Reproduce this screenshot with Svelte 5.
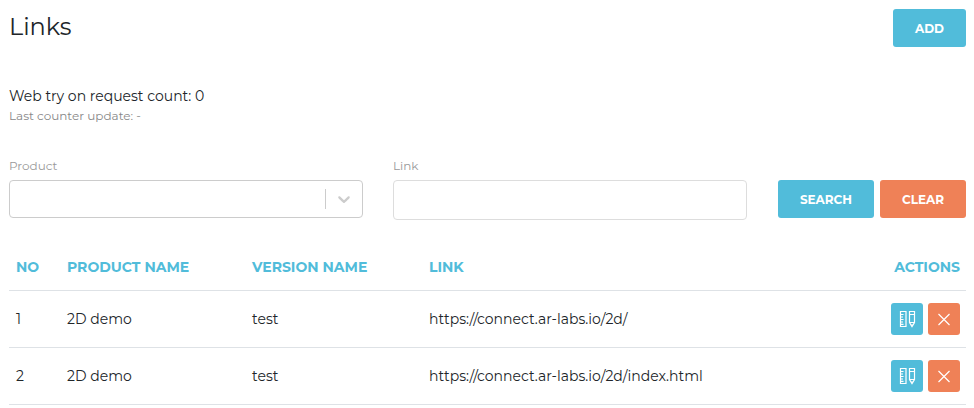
<script>
	let product = $state('');
	let link = $state('');

	const rows = [
		{ no: 1, product: '2D demo', version: 'test', link: 'https://connect.ar-labs.io/2d/' },
		{ no: 2, product: '2D demo', version: 'test', link: 'https://connect.ar-labs.io/2d/index.html' }
	];

	function clear() {
		product = '';
		link = '';
	}
</script>

<main>
	<header>
		<h1>Links</h1>
		<button class="btn" type="button">Add</button>
	</header>

	<section class="counter">
		<p>Web try on request count: 0</p>
		<small>Last counter update: -</small>
	</section>

	<form onsubmit={(e) => e.preventDefault()}>
		<div class="field">
			<label for="product">Product</label>
			<div class="select">
				<select id="product" bind:value={product}>
					<option value=""></option>
					<option value="2d">2D demo</option>
				</select>
				<span class="indicator">
					<svg width="20" height="20" viewBox="0 0 20 20" aria-hidden="true">
						<path
							d="M4.516 7.548c.436-.446 1.043-.481 1.576 0L10 11.295l3.908-3.747c.533-.481 1.141-.446 1.574 0 .436.445.408 1.197 0 1.615-.406.418-4.695 4.502-4.695 4.502-.217.223-.502.335-.787.335s-.57-.112-.789-.335c0 0-4.287-4.084-4.695-4.502s-.436-1.17 0-1.615z"
						/>
					</svg>
				</span>
			</div>
		</div>
		<div class="field">
			<label for="link">Link</label>
			<input id="link" type="text" bind:value={link} />
		</div>
		<div class="buttons">
			<button class="btn" type="submit">Search</button>
			<button class="btn danger" type="button" onclick={clear}>Clear</button>
		</div>
	</form>

	<table>
		<thead>
			<tr>
				<th class="no">No</th>
				<th class="product">Product name</th>
				<th class="version">Version name</th>
				<th>Link</th>
				<th class="actions">Actions</th>
			</tr>
		</thead>
		<tbody>
			{#each rows as row}
				<tr>
					<td>{row.no}</td>
					<td>{row.product}</td>
					<td>{row.version}</td>
					<td>{row.link}</td>
					<td class="actions">
						<div class="tools">
							<button class="icon" type="button" aria-label="Edit">
								<svg width="18" height="18" viewBox="0 0 18 18" aria-hidden="true">
									<path d="M2.5 1.5h5.5v15h-5.5z" />
									<path d="M3 4.5h2.5M3 7h2M3 9.5h2.5M3 12h2M3 14.3h2.5" />
									<path d="M11.5 1.5h5v11l-2.5 4-2.5-4zM11.5 4.5h5M11.5 12.5h5" />
									<path d="M13.2 15h1.6" />
								</svg>
							</button>
							<button class="icon danger" type="button" aria-label="Delete">
								<svg width="18" height="18" viewBox="0 0 18 18" aria-hidden="true">
									<path d="M3.5 4l11 11M14.5 4l-11 11" />
								</svg>
							</button>
						</div>
					</td>
				</tr>
			{/each}
		</tbody>
	</table>
</main>

<style>
	:global(body) {
		margin: 0;
		background: #fff;
	}

	main {
		padding: 9px 8px 0 9px;
		color: #212529;
		font-family: Montserrat, Inter, sans-serif;
		font-size: 14px;
		line-height: 20px;
	}

	header {
		display: flex;
		justify-content: space-between;
		align-items: flex-start;
	}

	h1 {
		margin: 0;
		font-size: 24px;
		font-weight: 400;
		line-height: 36px;
	}

	button,
	input,
	select {
		box-sizing: border-box;
		font: inherit;
	}

	.btn {
		height: 38px;
		padding: 1px 22px 0;
		border: 0;
		border-radius: 3px;
		background: #51bcda;
		color: #fff;
		font-size: 12px;
		font-weight: 700;
		text-transform: uppercase;
	}

	.danger {
		background: #ef8157;
	}

	.counter {
		margin-top: 39px;
	}

	.counter p {
		margin: 0;
	}

	small {
		display: block;
		color: #888;
		font-size: 12px;
	}

	form {
		display: grid;
		grid-template-columns: 1fr 1fr auto;
		gap: 30px;
		margin-top: 30px;
	}

	label {
		display: block;
		margin-bottom: 4px;
		color: #9a9a9a;
		font-size: 12px;
	}

	.select {
		position: relative;
	}

	select,
	input {
		display: block;
		width: 100%;
		height: 40px;
		padding: 0 10px;
		border: 1px solid #ddd;
		border-radius: 4px;
		background: #fff;
		color: inherit;
	}

	select {
		height: 38px;
		border-color: #ccc;
		appearance: none;
	}

	/* sits over the native select */
	.indicator {
		position: absolute;
		top: 9px;
		right: 1px;
		padding: 0 8px;
		border-left: 1px solid #ccc;
		pointer-events: none;
	}

	.indicator svg {
		display: block;
		fill: #ccc;
	}

	.buttons {
		display: flex;
		gap: 6px;
		padding: 24px 0 0 1px;
	}

	table {
		width: 100%;
		margin-top: 25px;
		border-collapse: collapse;
		table-layout: fixed;
	}

	th,
	td {
		padding: 12px 7px;
		border-bottom: 1px solid #dee2e6;
		text-align: left;
	}

	th {
		padding-bottom: 13px;
		color: #51bcda;
		font-weight: 700;
		text-transform: uppercase;
	}

	.no {
		width: 37px;
	}

	.product {
		width: 171px;
	}

	.version {
		width: 163px;
	}

	.actions {
		width: 80px;
		padding-right: 6px;
		text-align: right;
	}

	.tools {
		display: flex;
		justify-content: flex-end;
		gap: 5px;
	}

	.icon {
		display: grid;
		place-items: center;
		width: 32px;
		height: 32px;
		padding: 0;
		border: 0;
		border-radius: 3px;
		background: #51bcda;
	}

	.icon.danger {
		background: #ef8157;
	}

	.icon svg {
		fill: none;
		stroke: #fff;
		stroke-width: 1.2;
	}
</style>
